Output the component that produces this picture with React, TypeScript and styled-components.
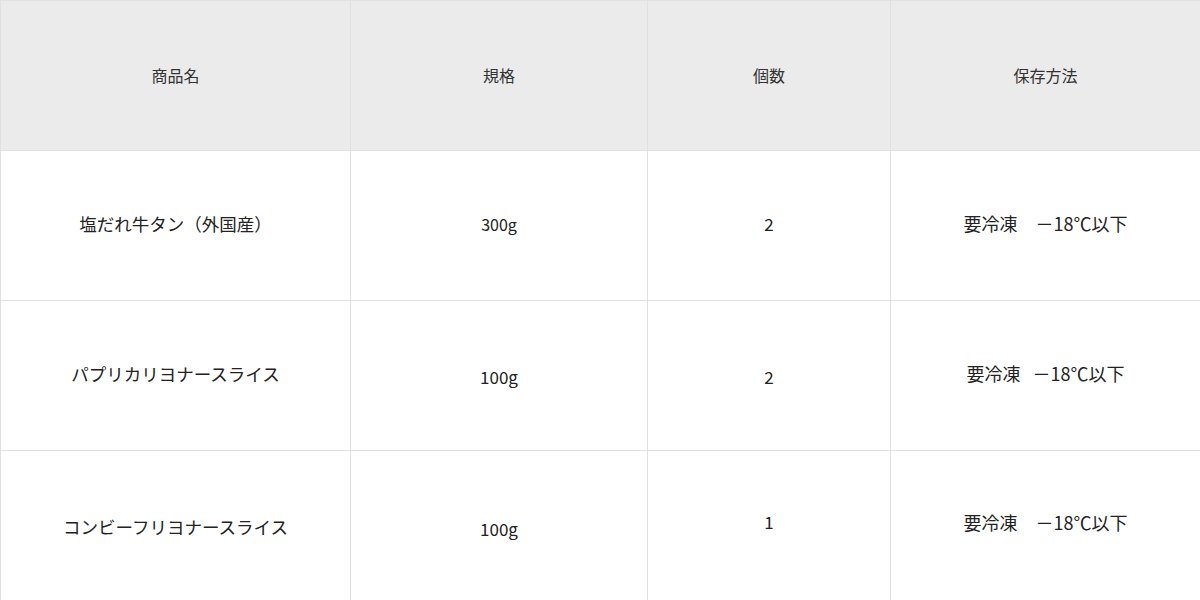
import React from "react";
import styled, { createGlobalStyle } from "styled-components";

const Global = createGlobalStyle`
  html, body { margin: 0; padding: 0; background: #fff; }
  body { font-family: "Noto Sans CJK JP", "Noto Sans", sans-serif; color: #222; }
`;

const Table = styled.table`
  width: 1200px;
  height: 600px;
  border-collapse: collapse;
  table-layout: fixed;
`;

const Col = styled.col<{ $w: number }>`
  width: ${(p) => p.$w}px;
`;

const HeadRow = styled.tr`
  height: 150px;
  background: #ebebeb;
`;

const BodyRow = styled.tr`
  height: 150px;
  background: #fff;
`;

const HeadCell = styled.th`
  border: 1px solid #e0e0e0;
  font-weight: 400;
  font-size: 16px;
  color: #333;
  text-align: center;
  vertical-align: middle;
  padding: 0 0 2px;
`;

const Cell = styled.td<{ $size?: number; $dy?: number }>`
  border: 1px solid #e0e0e0;
  font-size: ${(p) => p.$size ?? 17}px;
  color: #222;
  text-align: center;
  vertical-align: middle;
  padding: ${(p) => Math.max(0, (p.$dy ?? 0) * 2)}px 0 ${(p) => Math.max(0, -(p.$dy ?? 0) * 2)}px;
  white-space: pre;
`;

type Row = {
  name: string;
  nameDy: number;
  spec: string;
  specSize: number;
  specDy: number;
  qty: string;
  qtyDy: number;
  store: string;
  storeDy: number;
};

const rows: Row[] = [
  { name: "塩だれ牛タン（外国産）", nameDy: -2, spec: "300g", specSize: 16, specDy: -2, qty: "2", qtyDy: -2, store: "要冷凍　－18℃以下", storeDy: -3 },
  { name: "パプリカリヨナースライス", nameDy: -2, spec: "100g", specSize: 17, specDy: 1, qty: "2", qtyDy: 1, store: "要冷凍   －18℃以下", storeDy: -3 },
  { name: "コンビーフリヨナースライス", nameDy: 1, spec: "100g", specSize: 17, specDy: 3, qty: "1", qtyDy: -4, store: "要冷凍　－18℃以下", storeDy: -4 },
];

export default function App() {
  return (
    <>
      <Global />
      <Table>
        <colgroup>
          <Col $w={350} />
          <Col $w={297} />
          <Col $w={243} />
          <Col $w={310} />
        </colgroup>
        <thead>
          <HeadRow>
            <HeadCell>商品名</HeadCell>
            <HeadCell>規格</HeadCell>
            <HeadCell>個数</HeadCell>
            <HeadCell>保存方法</HeadCell>
          </HeadRow>
        </thead>
        <tbody>
          {rows.map((r) => (
            <BodyRow key={r.name}>
              <Cell $size={17.5} $dy={r.nameDy}>{r.name}</Cell>
              <Cell $size={r.specSize} $dy={r.specDy}>{r.spec}</Cell>
              <Cell $size={17} $dy={r.qtyDy}>{r.qty}</Cell>
              <Cell $size={18} $dy={r.storeDy}>{r.store}</Cell>
            </BodyRow>
          ))}
        </tbody>
      </Table>
    </>
  );
}
